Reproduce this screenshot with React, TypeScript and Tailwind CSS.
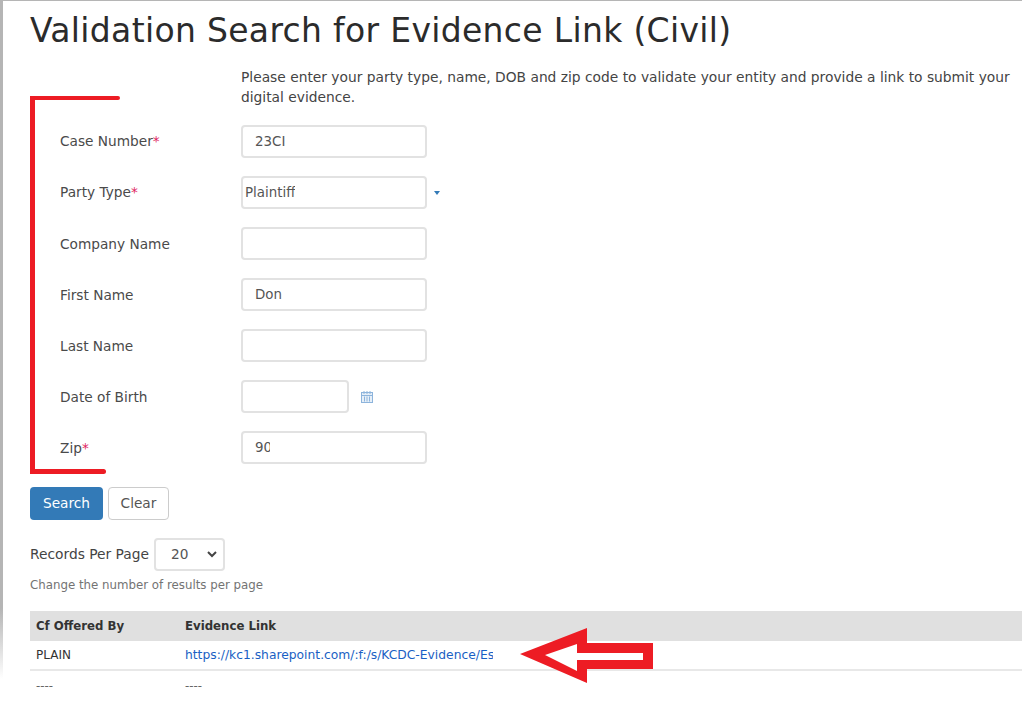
import React from "react";

const font = { fontFamily: '"DejaVu Sans", Verdana, sans-serif' };

function Field({ label, required, value, wide = true, after, textClass = "pl-[12px]", clip, labelClass = "" }: {
  label: string;
  required?: boolean;
  value?: string;
  wide?: boolean;
  after?: React.ReactNode;
  textClass?: string;
  clip?: string;
  labelClass?: string;
}) {
  return (
    <div className="flex h-[33px] items-center">
      <div className={`w-[211px] pl-[30px] text-[13.7px] text-[#4a4a4a] ${labelClass}`}>
        {label}
        {required && <span className="text-[#e0245e]">*</span>}
      </div>
      <div className={`flex h-[33px] items-center rounded-[4px] border-2 border-[#e2e2e2] bg-white ${wide ? "w-[186px]" : "w-[108px]"} ${textClass}`}>
        <span className={`overflow-hidden whitespace-nowrap pt-[2px] text-[13.4px] text-[#555555] ${clip ?? ""}`}>{value}</span>
      </div>
      {after}
    </div>
  );
}

export default function App() {
  return (
    <div className="relative h-[707px] w-[1022px] overflow-hidden border-t border-[#b5b5b5] bg-white" style={font}>
      <div className="absolute left-0 top-0 h-full w-[3px] bg-gradient-to-b from-[#b5b5b5] from-[86%] to-white to-[96%]" />

      <div className="pl-[30px]">
        <h1 className="pt-[10px] text-[33px] leading-[40px] tracking-[0.32px] text-[#2b2b2b]">
          Validation Search for Evidence Link (Civil)
        </h1>

        <p className="ml-[211px] mt-[16px] w-[781px] text-[13.8px] leading-[20px] text-[#444444]">
          Please enter your party type, name, DOB and zip code to validate your entity and provide a link to submit your digital evidence.
        </p>

        <div className="mt-[18px] flex flex-col gap-[18px]">
          <Field label="Case Number" required value="23CI" clip="w-[33px]" />
          <Field
            label="Party Type"
            required
            value="Plaintiff"
            textClass="pl-[2px]"
            after={<div className="ml-[7px] h-0 w-0 border-x-[3.5px] border-t-[4px] border-x-transparent border-t-[#337ab7]" />}
          />
          <Field label="Company Name" labelClass="pt-[2px]" />
          <Field label="First Name" value="Don" labelClass="pt-[2px]" />
          <Field label="Last Name" labelClass="pt-[2px]" />
          <Field
            label="Date of Birth"
            wide={false}
            labelClass="pt-[2px]"
            after={
              <svg className="ml-[11px] mt-[1px]" width="14" height="14" viewBox="0 0 14 14" fill="none" stroke="#8db4dc" strokeWidth="1">
                <rect x="1.5" y="2.5" width="11" height="10" fill="#e6eff8" />
                <path d="M4 1v3M7 1v3M10 1v3M1.5 5.5h11M4.5 6.5v5M7 6.5v5M9.5 6.5v5" />
              </svg>
            }
          />
          <Field label="Zip" required value="90" clip="w-[15px]" labelClass="pt-[2px]" />
        </div>

        <div className="mt-[23px] flex gap-[5px]">
          <button className="h-[33px] w-[73px] rounded-[4px] bg-[#337ab7] text-[13.7px] text-white">Search</button>
          <button className="h-[33px] w-[61px] rounded-[4px] border border-[#cccccc] bg-white text-[13.7px] text-[#555555]">Clear</button>
        </div>

        <div className="mt-[18px] flex items-center">
          <span className="text-[13.8px] text-[#444444]">Records Per Page</span>
          <div className="ml-[5px] flex h-[33px] w-[71px] items-center justify-between rounded-[4px] border-2 border-[#e2e2e2] pl-[15px] pr-[6px] text-[13.7px] text-[#555555]">
            20
            <svg width="10" height="7" viewBox="0 0 10 7" fill="none" stroke="#444444" strokeWidth="2">
              <path d="M1 1l4 4 4-4" />
            </svg>
          </div>
        </div>

        <p className="mt-[7px] text-[11.8px] leading-[14px] text-[#737373]">Change the number of results per page</p>

        <div className="mt-[19px] text-[11.75px]">
          <div className="flex h-[30px] items-center bg-[#e0e0e0] pt-[2px] font-bold text-[#333333]">
            <div className="w-[155px] pl-[6px]">Cf Offered By</div>
            <div>Evidence Link</div>
          </div>
          <div className="flex h-[30px] items-center border-b-2 border-[#e8e8e8] text-[#333333]">
            <div className="w-[155px] pl-[6px] text-[12px]">PLAIN</div>
            <div className="w-[308px] overflow-hidden whitespace-nowrap text-[12.3px] text-[#1a5fc4]">https://kc1.sharepoint.com/:f:/s/KCDC-Evidence/EsXkq2</div>
          </div>
          <div className="flex h-[30px] items-center pt-[1px] text-[#666666]">
            <div className="w-[155px] pl-[6px]">----</div>
            <div>----</div>
          </div>
        </div>
      </div>

      {/* Red annotations */}
      <div className="absolute left-[30px] top-[95px] h-[4px] w-[90px] rounded-l-[2px] rounded-r-full bg-[#ed1c24]" />
      <div className="absolute left-[30px] top-[95px] h-[378px] w-[5px] rounded-[2px] bg-[#ed1c24]" />
      <div className="absolute left-[30px] top-[468px] h-[5px] w-[76px] rounded-l-[2px] rounded-r-full bg-[#ed1c24]" />
      <svg className="absolute left-[515px] top-[626px]" width="140" height="57" viewBox="0 0 140 57">
        <path d="M5 27 L72 1 V16 H138 V42 H72 V56 Z" fill="#ed1c24" />
        <path d="M30 28 L62 17 V26 H128 V33 H62 V44 Z" fill="#ffffff" />
      </svg>
    </div>
  );
}
